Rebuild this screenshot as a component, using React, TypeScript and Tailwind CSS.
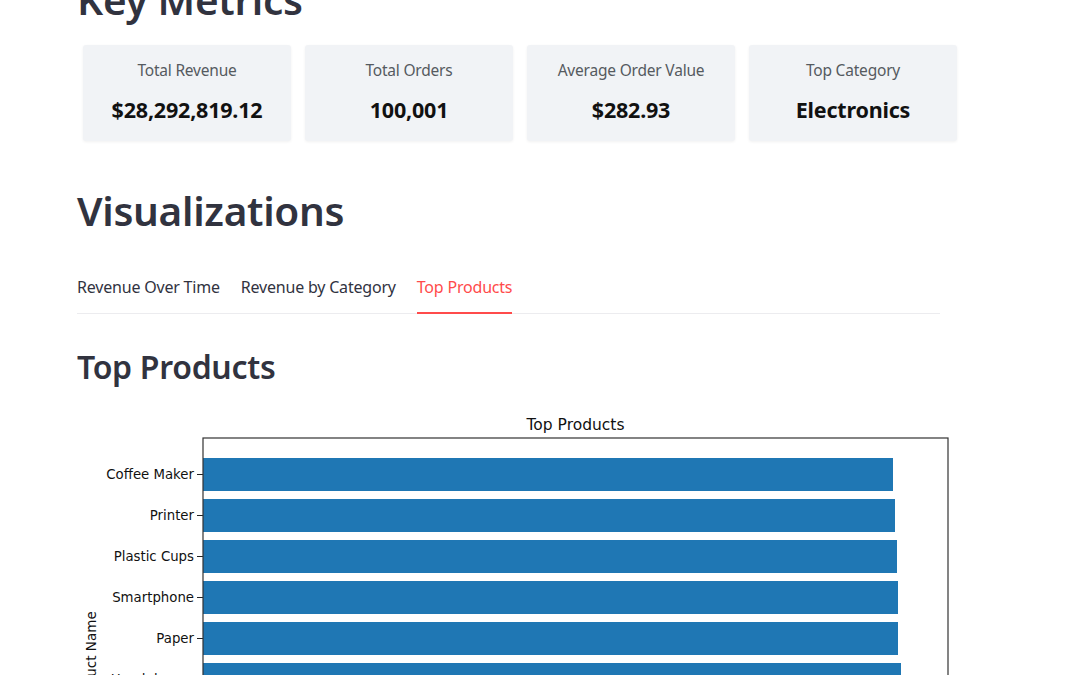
import React from 'react';

const metrics = [
  { label: 'Total Revenue', value: '$28,292,819.12' },
  { label: 'Total Orders', value: '100,001' },
  { label: 'Average Order Value', value: '$282.93' },
  { label: 'Top Category', value: 'Electronics' },
];

const tabs = ['Revenue Over Time', 'Revenue by Category', 'Top Products'];

const products = [
  { name: 'Coffee Maker', end: 816 },
  { name: 'Printer', end: 818 },
  { name: 'Plastic Cups', end: 820 },
  { name: 'Smartphone', end: 821 },
  { name: 'Paper', end: 821 },
  { name: 'Headphones', end: 824 },
  { name: 'Desk Lamp', end: 826 },
  { name: 'Notebook', end: 829 },
  { name: 'Tablet', end: 832 },
  { name: 'Blender', end: 836 },
];

const TopProductsChart = () => {
  const axLeft = 126;
  const axRight = 871;
  const axTop = 33;
  const pitch = 41;
  const barH = 33;
  const firstBar = 53;
  const axBottom = firstBar + pitch * products.length + 12;
  return (
    <svg width={883} height={axBottom + 60} className="block" style={{ fontFamily: '"DejaVu Sans", sans-serif' }}>
      <text x={(axLeft + axRight) / 2} y={25} textAnchor="middle" fontSize={15.5} fill="#111">
        Top Products
      </text>
      {products.map((p, i) => {
        const y = firstBar + i * pitch;
        const cy = y + barH / 2;
        return (
          <g key={p.name}>
            <rect x={axLeft} y={y} width={p.end - axLeft} height={barH} fill="#1f77b4" />
            <line x1={axLeft - 6} y1={cy} x2={axLeft} y2={cy} stroke="#222" strokeWidth={1} />
            <text x={axLeft - 9} y={cy + 4.5} textAnchor="end" fontSize={13.3} fill="#111">
              {p.name}
            </text>
          </g>
        );
      })}
      <rect x={axLeft} y={axTop} width={axRight - axLeft} height={axBottom - axTop} fill="none" stroke="#333" strokeWidth={1.2} />
      <text
        transform={`translate(${19}, ${254}) rotate(-90)`}
        textAnchor="middle"
        fontSize={13.5}
        fill="#111"
      >
        Product Name
      </text>
    </svg>
  );
};

export default function App() {
  return (
    <div className="min-h-screen bg-white overflow-hidden" style={{ fontFamily: '"Noto Sans", sans-serif' }}>
      <div className="pl-[77px] w-[960px]">
        {/* Key Metrics */}
        <h2 className="mt-[-26px] text-[40.5px] leading-[52px] font-semibold text-[#31333f] tracking-[-0.3px]">Key Metrics</h2>
        <div className="mt-[19px] pl-[6px] flex gap-[14px]">
          {metrics.map((m) => (
            <div
              key={m.label}
              className="w-[208px] h-[96px] bg-[#f1f3f6] rounded-[3px] shadow-[0_1px_3px_rgba(0,0,0,0.06)] flex flex-col items-center pt-[14px]"
            >
              <div className="text-[15.5px] leading-[22px] text-[#555a60] tracking-[-0.2px]">{m.label}</div>
              <div className="mt-[15px] text-[21.5px] leading-[28px] font-bold text-[#111] tracking-[-0.2px]">{m.value}</div>
            </div>
          ))}
        </div>

        {/* Visualizations */}
        <h2 className="mt-[44px] text-[40.5px] leading-[52px] font-semibold text-[#31333f] tracking-[-0.3px]">Visualizations</h2>
        <div className="mt-[39px] w-[863px] flex gap-[21px] border-b border-[#ececef]">
          {tabs.map((t, i) => (
            <div
              key={t}
              className={
                i === 2
                  ? 'pb-[14px] text-[16px] leading-[22px] text-[#ff4b4b] border-b-2 border-[#ff4b4b] mb-[-1px] tracking-[-0.2px]'
                  : 'pb-[14px] text-[16px] leading-[22px] text-[#31333f] tracking-[-0.2px]'
              }
            >
              {t}
            </div>
          ))}
        </div>

        {/* Top Products */}
        <h3 className="mt-[31px] text-[32px] leading-[44px] font-semibold text-[#31333f] tracking-[-0.3px]">Top Products</h3>
        <div className="mt-[16px]">
          <TopProductsChart />
        </div>
      </div>
    </div>
  );
}
